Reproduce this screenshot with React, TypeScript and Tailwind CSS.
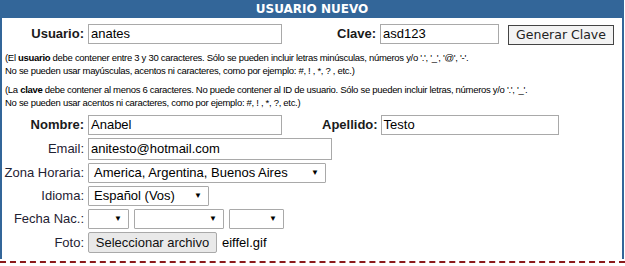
import type { ReactNode } from 'react'

const LABEL = 'whitespace-nowrap text-right text-[13px] text-[#1f2233] [font-family:"Liberation_Sans",Arial,sans-serif]'
const BOLD_LABEL = 'whitespace-nowrap text-right text-[13px] font-bold text-[#1a1a1a] [font-family:"Liberation_Sans",Arial,sans-serif]'
const INPUT =
  'h-[20px] border border-[#a9a9a9] bg-white px-[2px] text-[13px] leading-[18px] text-black [font-family:"Liberation_Sans",Arial,sans-serif]'

function FakeSelect({ value, width }: { value?: string; width: number }) {
  return (
    <div
      className="flex h-[20px] items-center justify-between rounded-[1px] border border-[#a9a9a9] bg-white pl-[5px] pr-[6px] text-[13px] text-black [font-family:'Liberation_Sans',Arial,sans-serif]"
      style={{ width }}
    >
      <span className="whitespace-nowrap">{value}</span>
      <span className="text-[8px]">▼</span>
    </div>
  )
}

function Row({ label, bold, children }: { label: string; bold?: boolean; children: ReactNode }) {
  return (
    <div className="flex items-center gap-[4px]">
      <div className={`w-[82px] shrink-0 ${bold ? BOLD_LABEL : LABEL}`}>{label}</div>
      {children}
    </div>
  )
}

export default function App() {
  return (
    <div className="w-[625px] h-[266px] overflow-hidden bg-white">
      <div className="h-[259px] w-[624px] border-x-2 border-[#336699]">
        <div className="h-[18px] bg-[#336699] text-center text-[12px] font-bold leading-[18px] text-white [font-family:Verdana,'DejaVu_Sans',sans-serif]">
          USUARIO NUEVO
        </div>

        <div className="mt-[4px] flex items-center">
          <Row label="Usuario:" bold>
            <div className={`${INPUT} w-[194px]`}>anates</div>
          </Row>
          <div className={`ml-[55px] ${BOLD_LABEL}`}>Clave:</div>
          <div className={`${INPUT} ml-[4px] w-[119px]`}>asd123</div>
          <button className="ml-[9px] mt-[3px] h-[20px] w-[106px] border border-[#444] bg-[#f3f3f3] text-[12.5px] leading-[18px] text-[#222] [font-family:Verdana,'DejaVu_Sans',sans-serif]">
            Generar Clave
          </button>
        </div>

        <div className="mt-[6px] pl-[3px] text-[9.5px] leading-[13px] tracking-[-0.3px] text-black [font-family:Tahoma,'Liberation_Sans',sans-serif]">
          <p>
            (El <b>usuario</b> debe contener entre 3 y 30 caracteres. Sólo se pueden incluir letras minúsculas, números y/o '.', '_', '@', '-'.
            <br />
            No se pueden usar mayúsculas, acentos ni caracteres, como por ejemplo: #, ! , *, ? , etc.)
          </p>
          <p className="mt-[6px]">
            (La <b>clave</b> debe contener al menos 6 caracteres. No puede contener al ID de usuario. Sólo se pueden incluir letras, números y/o '.', '_'.
            <br />
            No se pueden usar acentos ni caracteres, como por ejemplo: #, ! , *, ?, etc.)
          </p>
        </div>

        <div className="mt-[6px] flex flex-col gap-[3px]">
          <div className="flex items-center">
            <Row label="Nombre:" bold>
              <div className={`${INPUT} w-[194px]`}>Anabel</div>
            </Row>
            <div className={`ml-[40px] ${BOLD_LABEL}`}>Apellido:</div>
            <div className={`${INPUT} ml-[3px] w-[178px]`}>Testo</div>
          </div>
          <Row label="Email:">
            <div className={`${INPUT} h-[22px] w-[244px] leading-[20px]`}>anitesto@hotmail.com</div>
          </Row>
          <Row label="Zona Horaria:">
            <FakeSelect value="America, Argentina, Buenos Aires" width={238} />
          </Row>
          <Row label="Idioma:">
            <FakeSelect value="Español (Vos)" width={121} />
          </Row>
          <Row label="Fecha Nac.:">
            <div className="flex gap-[5px]">
              <FakeSelect width={41} />
              <FakeSelect width={90} />
              <FakeSelect width={55} />
            </div>
          </Row>
          <Row label="Foto:">
            <div className="flex items-center gap-[5px] text-[13px] text-black [font-family:'Liberation_Sans',Arial,sans-serif]">
              <button className="h-[21px] w-[129px] rounded-[2px] border border-[#a9a9a9] bg-[#e9e9e9] text-[13px] leading-[19px] text-[#111]">
                Seleccionar archivo
              </button>
              <span>eiffel.gif</span>
            </div>
          </Row>
        </div>
      </div>
      <div className="mt-[2px] h-0 border-t-2 border-dashed border-[#8b1a1a]" />
    </div>
  )
}
